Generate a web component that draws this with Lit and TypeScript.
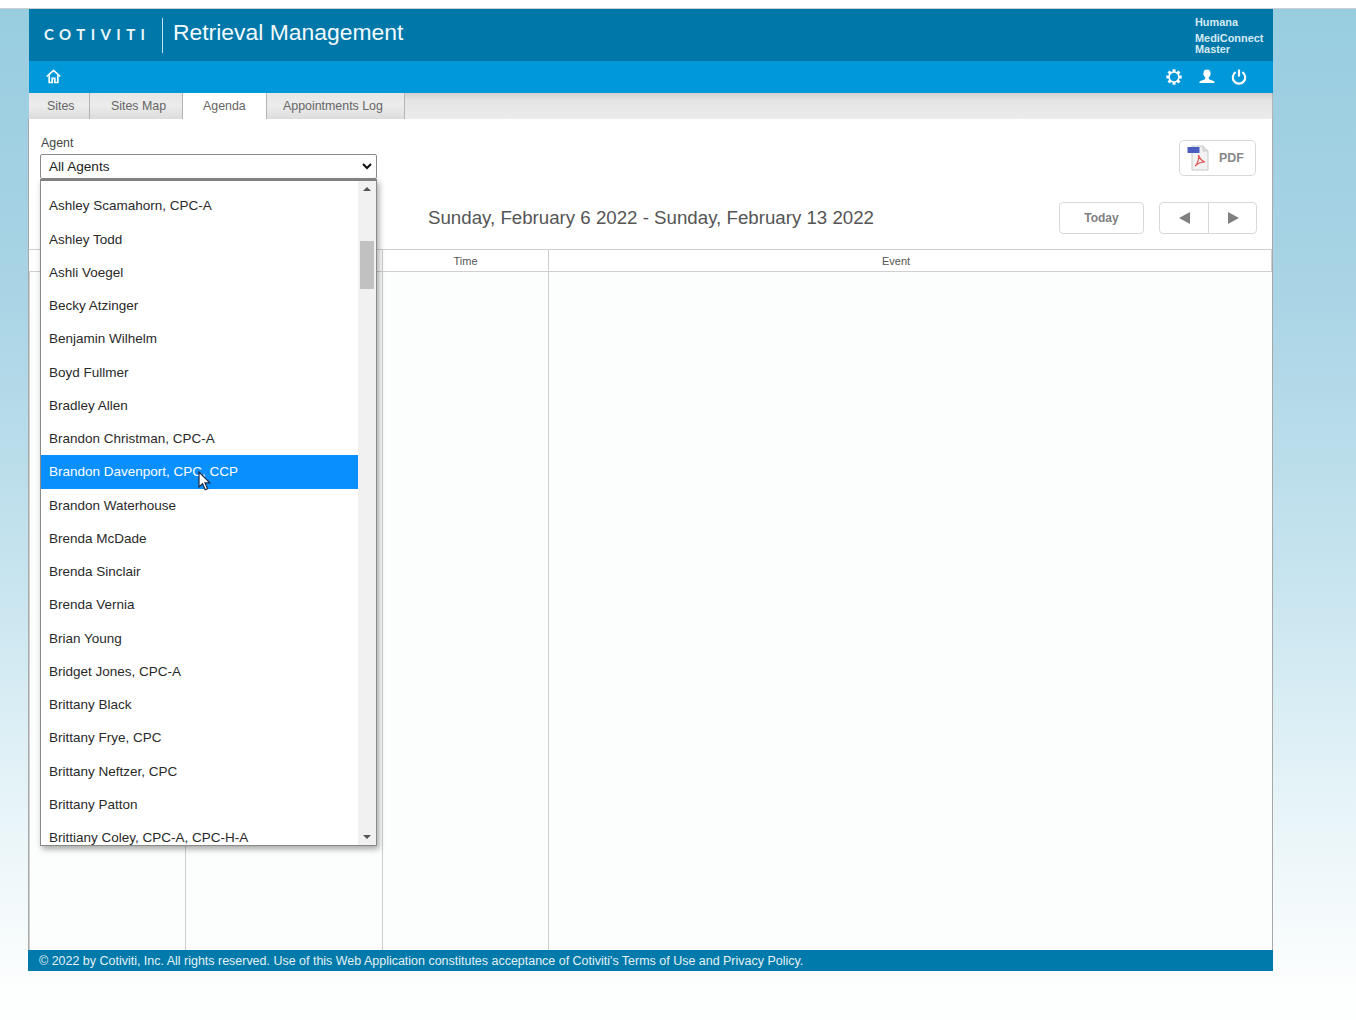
import { LitElement, html, css, svg } from "lit";
import { customElement } from "lit/decorators.js";

const AGENTS = [
  "Ashley Scamahorn, CPC-A", "Ashley Todd", "Ashli Voegel", "Becky Atzinger", "Benjamin Wilhelm",
  "Boyd Fullmer", "Bradley Allen", "Brandon Christman, CPC-A", "Brandon Davenport, CPC, CCP",
  "Brandon Waterhouse", "Brenda McDade", "Brenda Sinclair", "Brenda Vernia", "Brian Young",
  "Bridget Jones, CPC-A", "Brittany Black", "Brittany Frye, CPC", "Brittany Neftzer, CPC",
  "Brittany Patton", "Brittiany Coley, CPC-A, CPC-H-A",
];
const TABS = [
  { label: "Sites", width: 61, pad: 18 },
  { label: "Sites Map", width: 93, pad: 21 },
  { label: "Agenda", width: 84, pad: 20 },
  { label: "Appointments Log", width: 138, pad: 16 },
];

const gearTeeth = [0, 45, 90, 135, 180, 225, 270, 315].map(
  (a) => svg`<rect x="6.5" y="0.3" width="3" height="3" fill="#fff" transform="rotate(${a} 8 8)"></rect>`
);

@customElement("app-root")
export class AppRoot extends LitElement {
  static styles = css`
    :host {
      display: block;
      height: 1020px;
      box-sizing: border-box;
      padding: 9px 0 0 29px;
      font-family: "Liberation Sans", Arial, sans-serif;
      overflow: hidden;
      background:
        linear-gradient(#fff 0, #fff 8px, #c9cfd2 8px, #c9cfd2 9px, transparent 9px),
        linear-gradient(#98cde0 9px, #a9d4e5 290px, #c5e3ee 560px, #e6f4f8 800px, #fdfefe 990px);
    }
    .app { width: 1244px; height: 962px; display: flex; flex-direction: column; }
    .header {
      height: 52px; flex: none; background: #0077a9; color: #fff;
      display: flex; align-items: center; position: relative;
    }
    .logo {
      font-family: Lato, "Liberation Sans", sans-serif; font-size: 15px; font-weight: 700;
      letter-spacing: 5.4px; margin: 0 0 2px 15px; width: 103px; color: #eaf6fb; white-space: nowrap;
    }
    .sep { width: 1px; height: 35px; background: #bfe3ef; margin: 0 10px 0 15px; }
    .appname { font-size: 22.9px; color: #f2fafd; margin-bottom: 6px; }
    .client {
      margin-left: auto; width: 78px; font-size: 10.9px; font-weight: 700; color: #d5ebf4;
      line-height: 11.5px; align-self: flex-start; padding-top: 8px;
    }
    .client div:first-child { margin-bottom: 4px; }
    .nav {
      height: 32px; flex: none; background: #0098d9; display: flex; align-items: center;
      padding: 0 26px 0 17px; box-sizing: border-box;
    }
    .nav svg { display: block; }
    .home { margin-bottom: 2px; }
    .gear { margin: 0 1px 0 -1px; }
    .nav .right { margin-left: auto; display: flex; gap: 16px; align-items: center; }
    .tabs {
      height: 26px; flex: none; display: flex; position: relative;
      background: linear-gradient(#cfcfcf 0, #e4e4e4 7px, #ececec 100%);
      border-right: 1px solid #b5b5b5; box-sizing: border-box;
    }
    .tab {
      font-size: 12.4px; color: #666; display: flex; align-items: center;
      box-sizing: border-box; border-right: 1px solid #b4b4b4; white-space: nowrap;
      background: linear-gradient(#e6e6e6, #ececec 50%, #dcdcdc);
    }
    .tab.active { background: #fff; border-right-color: #b4b4b4; }
    .main {
      flex: 1; min-height: 0; display: flex; flex-direction: column; background: #fff;
      border-left: 1px solid #a8a8a8; border-right: 1px solid #a8a8a8; margin-left: -1px; width: 1245px; box-sizing: border-box;
    }
    .toolbar {
      height: 83px; flex: none; box-sizing: border-box; display: flex; justify-content: space-between;
      padding: 16px 16px 0 11px; align-items: flex-start;
    }
    .agent { width: 337px; position: relative; }
    .agent label { display: block; font-size: 12.4px; color: #444; line-height: 16px; margin: 0 0 3px 1px; }
    .select {
      height: 25px; box-sizing: border-box; border: 1px solid #8a8a8a; border-radius: 2px; background: #fff;
      display: flex; align-items: center; justify-content: space-between; padding: 0 4px 0 8px;
      font-size: 13.6px; color: #222;
    }
    .dropdown {
      position: absolute; left: 0; top: 44px; width: 337px; height: 667px; box-sizing: border-box;
      background: #fff; border: 1px solid #8a8a8a; border-top: 2px solid #808080;
      box-shadow: 2px 3px 6px rgba(0, 0, 0, 0.35); display: flex; z-index: 5; overflow: hidden;
    }
    .list { flex: 1; min-width: 0; padding-top: 8.4px; overflow: hidden; }
    .opt {
      height: 33.25px; line-height: 33.25px; padding-left: 8px; font-size: 13.5px; color: #2a2a2a; white-space: nowrap;
    }
    .opt.sel { background: #0a8fff; color: #fff; }
    .scroll { width: 18px; flex: none; background: #f1f1f1; position: relative; display: flex; flex-direction: column; align-items: center; justify-content: space-between; padding: 6px 0; box-sizing: border-box; }
    .thumb { position: absolute; left: 2px; top: 60px; width: 14px; height: 48px; background: #c1c1c1; }
    .cursor { position: absolute; left: 158px; top: 336px; z-index: 6; display: block; }
    .pdf {
      width: 77px; height: 36px; margin-top: 5px; box-sizing: border-box; background: #fff;
      border: 1px solid #d8d8d8; border-radius: 5px; display: flex; align-items: center;
      gap: 10px; padding-left: 7px; font-size: 12.4px; font-weight: 700; color: #888;
    }
    .titlerow { height: 32px; flex: none; display: flex; align-items: center; padding: 0 15px 0 399px; }
    .title { font-size: 18.7px; color: #555; margin-right: auto; white-space: nowrap; }
    .btn {
      height: 32px; box-sizing: border-box; border: 1px solid #d8d8d8; background: #fff; border-radius: 4px;
      display: flex; align-items: center; justify-content: center; color: #808080; font-size: 12px; font-weight: 700;
    }
    .today { width: 85px; margin-right: 15px; }
    .group { width: 98px; }
    .group span { height: 100%; display: flex; align-items: center; justify-content: center; box-sizing: border-box; }
    .group span:first-child { width: 49px; border-right: 1px solid #d8d8d8; }
    .group span:last-child { flex: 1; padding-left: 2px; }
    .table {
      flex: 1; min-height: 0; margin-top: 15px; display: grid;
      grid-template-columns: 156px 197px 166px 1fr; grid-template-rows: 23px 1fr; background: #fbfefc;
    }
    .th {
      background: #fff; border-top: 1px solid #cfcfcf; border-bottom: 1px solid #cfcfcf; border-left: 1px solid #cfcfcf;
      font-size: 11px; color: #555; display: flex; align-items: center; justify-content: center;
    }
    .th:first-child, .td:first-child { border-left: none; }
    .th.event { padding-right: 28px; border-right: 1px solid #cfcfcf; }
    .td { border-left: 1px solid #cfcfcf; }
    .footer {
      height: 21px; flex: none; background: #0079ab; color: #e4f2f7; font-size: 12.47px;
      display: flex; align-items: center; padding-left: 11px; white-space: nowrap;
      margin-left: -1px; width: 1245px; box-sizing: border-box;
    }
  `;

  render() {
    return html`
      <div class="app">
        <div class="header">
          <div class="logo">COTIVITI</div>
          <div class="sep"></div>
          <div class="appname">Retrieval Management</div>
          <div class="client"><div>Humana</div><div>MediConnect</div><div>Master</div></div>
        </div>
        <div class="nav">
          <svg class="home" width="15" height="15" viewBox="0 0 16 16" fill="none" stroke="#fff" stroke-width="1.8">
            <path d="M.8 8 8 1.400 15.200 8" stroke-linejoin="round" />
            <path d="M3.400 6.600V14.400h3.200V10h2.800v4.400h3.200V6.600" />
          </svg>
          <div class="right">
            <svg class="gear" width="16" height="16" viewBox="0 0 16 16">
              ${gearTeeth}
              <circle cx="8" cy="8" r="5" fill="none" stroke="#fff" stroke-width="1.600"></circle>
            </svg>
            <svg width="16" height="16" viewBox="0 0 16 16" fill="#fff">
              <ellipse cx="8" cy="4.400" rx="3.600" ry="4"></ellipse>
              <path d="M6.400 7.500h3.200l.4 2.700 4.600 1.700c.7.300 1 1 1 2.100H.4c0-1.100.3-1.800 1-2.100L6 10.200z"></path>
            </svg>
            <svg width="16" height="16" viewBox="0 0 16 16" fill="none" stroke="#fff" stroke-width="2.200">
              <path d="M4.600 3.200a6.200 6.200 0 1 0 6.800 0"></path>
              <path d="M8 .6v7"></path>
            </svg>
          </div>
        </div>
        <div class="tabs">
          ${TABS.map(
            (t) => html`<div class="tab ${t.label === "Agenda" ? "active" : ""}" style="width:${t.width}px;padding-left:${t.pad}px">${t.label}</div>`
          )}
        </div>
        <div class="main">
          <div class="toolbar">
            <div class="agent">
              <label>Agent</label>
              <div class="select">
                <span>All Agents</span>
                <svg width="10" height="7" viewBox="0 0 10 7" fill="none" stroke="#111" stroke-width="2"><path d="M1 1l4 4 4-4"></path></svg>
              </div>
              <div class="dropdown">
                <div class="list">
                  ${AGENTS.map(
                    (a) => html`<div class="opt ${a.startsWith("Brandon Davenport") ? "sel" : ""}">${a}</div>`
                  )}
                </div>
                <div class="scroll">
                  <svg width="8" height="4" viewBox="0 0 8 4" fill="#555"><path d="M0 4l4-4 4 4z"></path></svg>
                  <div class="thumb"></div>
                  <svg width="8" height="4" viewBox="0 0 8 4" fill="#555"><path d="M0 0l4 4 4-4z"></path></svg>
                </div>
              </div>
              <svg class="cursor" width="14" height="20" viewBox="0 0 14 20">
                <path d="M1 1v15l3.600-3.300 2.600 6 2.400-1-2.600-5.800h4.800z" fill="#fff" stroke="#1c2a44" stroke-width="1.200"></path>
              </svg>
            </div>
            <div class="pdf">
              <svg width="22" height="26" viewBox="0 0 22 26">
                <path d="M5 1h11l5 5v19H5z" fill="#f2f2f2" stroke="#c9c9c9"></path>
                <path d="M16 1v5h5" fill="#ddd" stroke="#c9c9c9"></path>
                <rect x="0.500" y="2" width="12" height="6" fill="#4a5cc0"></rect>
                <path d="M8 21c3-2 4-8 3.500-11 1 3 3 6 6.500 7-3 0-7 1-10 4z" fill="none" stroke="#e0554f" stroke-width="1.200"></path>
              </svg>
              PDF
            </div>
          </div>
          <div class="titlerow">
            <div class="title">Sunday, February 6 2022 - Sunday, February 13 2022</div>
            <div class="btn today">Today</div>
            <div class="btn group">
              <span><svg width="11" height="12" viewBox="0 0 11 12" fill="#808080"><path d="M11 0v12L0 6z"></path></svg></span>
              <span><svg width="11" height="12" viewBox="0 0 11 12" fill="#808080"><path d="M0 0v12l11-6z"></path></svg></span>
            </div>
          </div>
          <div class="table">
            <div class="th"></div><div class="th"></div><div class="th">Time</div><div class="th event">Event</div>
            <div class="td"></div><div class="td"></div><div class="td"></div><div class="td"></div>
          </div>
        </div>
        <div class="footer">© 2022 by Cotiviti, Inc. All rights reserved. Use of this Web Application constitutes acceptance of Cotiviti's Terms of Use and Privacy Policy.</div>
      </div>
    `;
  }
}
